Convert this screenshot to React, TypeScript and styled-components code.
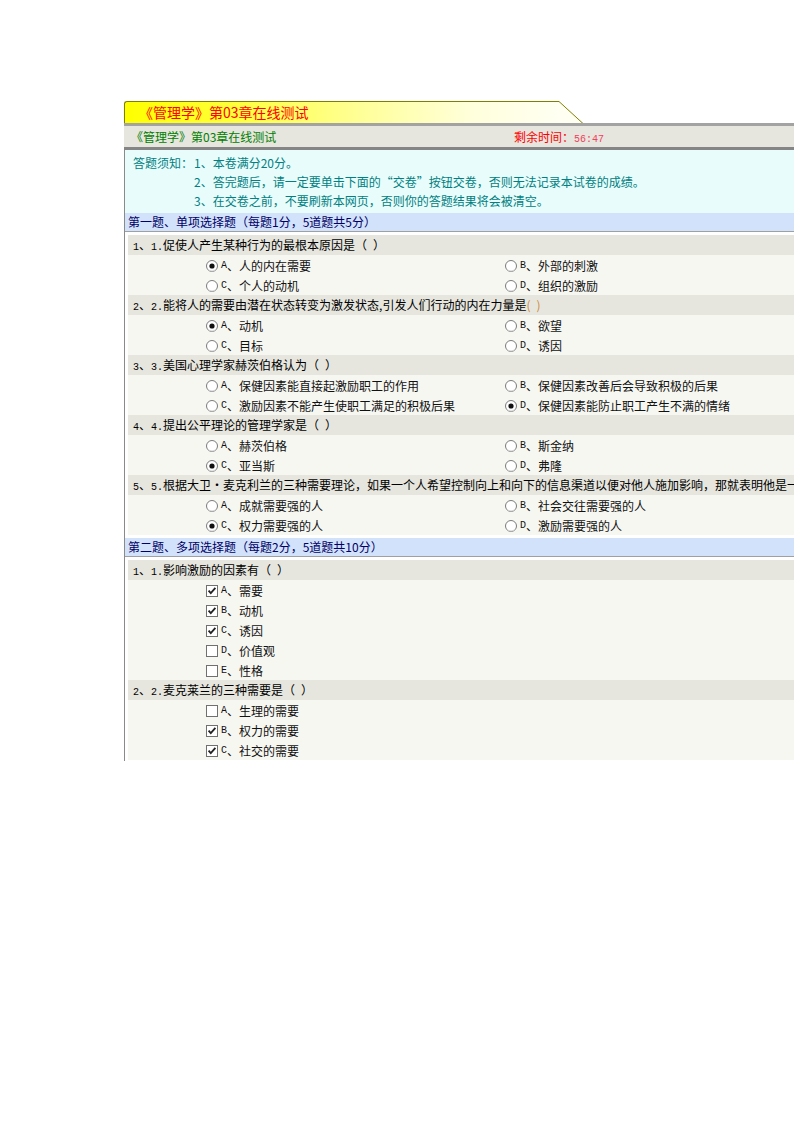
import React from "react";
import styled, { createGlobalStyle } from "styled-components";

const GlobalStyle = createGlobalStyle`
    html, body {
        margin: 0;
        padding: 0;
        background: #ffffff;
    }
    body {
        font-family: "Noto Sans CJK SC", "Liberation Sans", sans-serif;
        font-size: 12px;
        color: #000;
    }
`;

const Page = styled.div`
    width: 794px;
    height: 1123px;
    overflow: hidden;
    box-sizing: border-box;
    padding: 101px 0 0 124px;
`;

const Sheet = styled.div`
    width: 720px;
`;

const TabRow = styled.div`
    display: flex;
    height: 22px;
`;

const Tab = styled.div`
    width: 435px;
    box-sizing: border-box;
    border-top: 1px solid #808000;
    border-left: 1px solid #808000;
    border-top-left-radius: 3px;
    background: linear-gradient(
        to right,
        #ffff00 0%,
        #ffff3a 25%,
        #ffff9a 55%,
        #ffffdc 80%,
        #fffff2 100%
    );
    padding-left: 14px;
    font-size: 14px;
    line-height: 21px;
    color: #ff0000;
    white-space: nowrap;
`;

const HeaderBar = styled.div`
    display: grid;
    grid-template-columns: 383px auto;
    height: 21px;
    line-height: 21px;
    border-top: 3px solid #a3a3a3;
    border-bottom: 3px solid #858585;
    background: #e6e5de;
    padding-left: 7px;
    white-space: nowrap;
`;

const HeaderTitle = styled.span`
    color: #008000;
`;

const Timer = styled.span`
    color: #ff0000;
`;

const TimerDigits = styled.span`
    font-family: "Liberation Mono", monospace;
    font-size: 10px;
    color: #f0405a;
`;

const Body = styled.div`
    height: 611px;
    overflow: hidden;
    border-left: 1px solid #8a8a8a;
`;

const Notice = styled.div`
    height: 63px;
    box-sizing: border-box;
    padding: 3px 0 0 8px;
    background: #e8fcfc;
    color: #008080;
    display: grid;
    grid-template-columns: 61px auto;
    grid-auto-rows: 19px;
    line-height: 19px;
    white-space: nowrap;
`;

const SectionHeader = styled.div`
    height: 18px;
    line-height: 18px;
    padding-left: 3px;
    background: #d2e2fa;
    border-bottom: 1px solid #a0a0a0;
    color: #000066;
    white-space: nowrap;
`;

const QuestionList = styled.div`
    padding: 3px 0;
    background: #ffffff;
`;

const QuestionRow = styled.div`
    margin-left: 3px;
    height: 20px;
    line-height: 19px;
    padding-left: 5px;
    background: #e6e6de;
    white-space: nowrap;
    overflow: hidden;
`;

const Blank = styled.span<{ $tone?: string }>`
    color: ${(p) => p.$tone || "inherit"};
`;

const Options = styled.div<{ $cols: number }>`
    margin-left: 3px;
    padding-left: 78px;
    background: #f7f7f2;
    display: grid;
    grid-template-columns: ${(p) => (p.$cols === 2 ? "299px 1fr" : "1fr")};
`;

const Option = styled.label`
    height: 20px;
    box-sizing: border-box;
    padding-top: 1px;
    display: flex;
    align-items: center;
    white-space: nowrap;
    color: #111;
`;

const Control = styled.svg`
    flex: none;
    margin-right: 3px;
`;

const Latin = styled.span`
    font-family: "Liberation Mono", monospace;
    font-size: 10px;
`;

const Radio = ({ checked }: { checked?: boolean }) => (
    <Control width="12" height="12" viewBox="0 0 12 12">
        <circle cx="6" cy="6" r="5.5" fill="#fff" stroke="#7a7a7a" />
        <path d="M2.2 9.3 A5 5 0 0 0 9.8 9.3" fill="none" stroke="#d8d8d8" />
        {checked && <circle cx="6" cy="6" r="2.6" fill="#111" />}
    </Control>
);

const Checkbox = ({ checked }: { checked?: boolean }) => (
    <Control width="12" height="12" viewBox="0 0 12 12">
        <rect x="0.5" y="0.5" width="11" height="11" fill="#fff" stroke="#707070" />
        {checked && (
            <path
                d="M2.6 5.6 L4.8 8.2 L9.4 2.8"
                fill="none"
                stroke="#222"
                strokeWidth="1.8"
            />
        )}
    </Control>
);

type Opt = { key: string; text: string; checked?: boolean };
type Question = { no: number; text: string; blank: string; tone?: string; options: Opt[] };

const FULL_BLANK = "（\u2002）";

const single: Question[] = [
    {
        no: 1,
        text: "促使人产生某种行为的最根本原因是",
        blank: FULL_BLANK,
        options: [
            { key: "A", text: "人的内在需要", checked: true },
            { key: "B", text: "外部的刺激" },
            { key: "C", text: "个人的动机" },
            { key: "D", text: "组织的激励" },
        ],
    },
    {
        no: 2,
        text: "能将人的需要由潜在状态转变为激发状态,引发人们行动的内在力量是",
        blank: "(\u2002)",
        tone: "#d0883a",
        options: [
            { key: "A", text: "动机", checked: true },
            { key: "B", text: "欲望" },
            { key: "C", text: "目标" },
            { key: "D", text: "诱因" },
        ],
    },
    {
        no: 3,
        text: "美国心理学家赫茨伯格认为",
        blank: FULL_BLANK,
        options: [
            { key: "A", text: "保健因素能直接起激励职工的作用" },
            { key: "B", text: "保健因素改善后会导致积极的后果" },
            { key: "C", text: "激励因素不能产生使职工满足的积极后果" },
            { key: "D", text: "保健因素能防止职工产生不满的情绪", checked: true },
        ],
    },
    {
        no: 4,
        text: "提出公平理论的管理学家是",
        blank: FULL_BLANK,
        options: [
            { key: "A", text: "赫茨伯格" },
            { key: "B", text: "斯金纳" },
            { key: "C", text: "亚当斯", checked: true },
            { key: "D", text: "弗隆" },
        ],
    },
    {
        no: 5,
        text: "根据大卫•麦克利兰的三种需要理论，如果一个人希望控制向上和向下的信息渠道以便对他人施加影响，那就表明他是一",
        blank: "",
        options: [
            { key: "A", text: "成就需要强的人" },
            { key: "B", text: "社会交往需要强的人" },
            { key: "C", text: "权力需要强的人", checked: true },
            { key: "D", text: "激励需要强的人" },
        ],
    },
];

const multiple: Question[] = [
    {
        no: 1,
        text: "影响激励的因素有",
        blank: FULL_BLANK,
        options: [
            { key: "A", text: "需要", checked: true },
            { key: "B", text: "动机", checked: true },
            { key: "C", text: "诱因", checked: true },
            { key: "D", text: "价值观" },
            { key: "E", text: "性格" },
        ],
    },
    {
        no: 2,
        text: "麦克莱兰的三种需要是",
        blank: FULL_BLANK,
        options: [
            { key: "A", text: "生理的需要" },
            { key: "B", text: "权力的需要", checked: true },
            { key: "C", text: "社交的需要", checked: true },
        ],
    },
];

const QuestionBlock = ({ q, multi }: { q: Question; multi?: boolean }) => (
    <>
        <QuestionRow>
            <Latin>{q.no}</Latin>、<Latin>{q.no}.</Latin>
            {q.text}
            <Blank $tone={q.tone}>{q.blank}</Blank>
        </QuestionRow>
        <Options $cols={multi ? 1 : 2}>
            {q.options.map((o) => (
                <Option key={o.key}>
                    {multi ? <Checkbox checked={o.checked} /> : <Radio checked={o.checked} />}
                    <Latin>{o.key}</Latin>、{o.text}
                </Option>
            ))}
        </Options>
    </>
);

const App: React.FC = () => (
    <>
        <GlobalStyle />
        <Page>
            <Sheet>
                <TabRow>
                    <Tab>《管理学》第03章在线测试</Tab>
                    <svg width="24" height="22" viewBox="0 0 24 22">
                        <polygon points="0,0 0,22 24,22" fill="#fffff2" />
                        <line x1="0" y1="0.5" x2="24" y2="22.5" stroke="#808000" />
                    </svg>
                </TabRow>
                <HeaderBar>
                    <HeaderTitle>《管理学》第03章在线测试</HeaderTitle>
                    <Timer>
                        剩余时间：<TimerDigits>56:47</TimerDigits>
                    </Timer>
                </HeaderBar>
                <Body>
                    <Notice>
                        <span>答题须知：</span>
                        <span>1、本卷满分20分。</span>
                        <span />
                        <span>2、答完题后，请一定要单击下面的“交卷”按钮交卷，否则无法记录本试卷的成绩。</span>
                        <span />
                        <span>3、在交卷之前，不要刷新本网页，否则你的答题结果将会被清空。</span>
                    </Notice>

                    <SectionHeader>第一题、单项选择题（每题1分，5道题共5分）</SectionHeader>
                    <QuestionList>
                        {single.map((q) => (
                            <QuestionBlock key={q.no} q={q} />
                        ))}
                    </QuestionList>

                    <SectionHeader>第二题、多项选择题（每题2分，5道题共10分）</SectionHeader>
                    <QuestionList>
                        {multiple.map((q) => (
                            <QuestionBlock key={q.no} q={q} multi />
                        ))}
                    </QuestionList>
                </Body>
            </Sheet>
        </Page>
    </>
);

export default App;
